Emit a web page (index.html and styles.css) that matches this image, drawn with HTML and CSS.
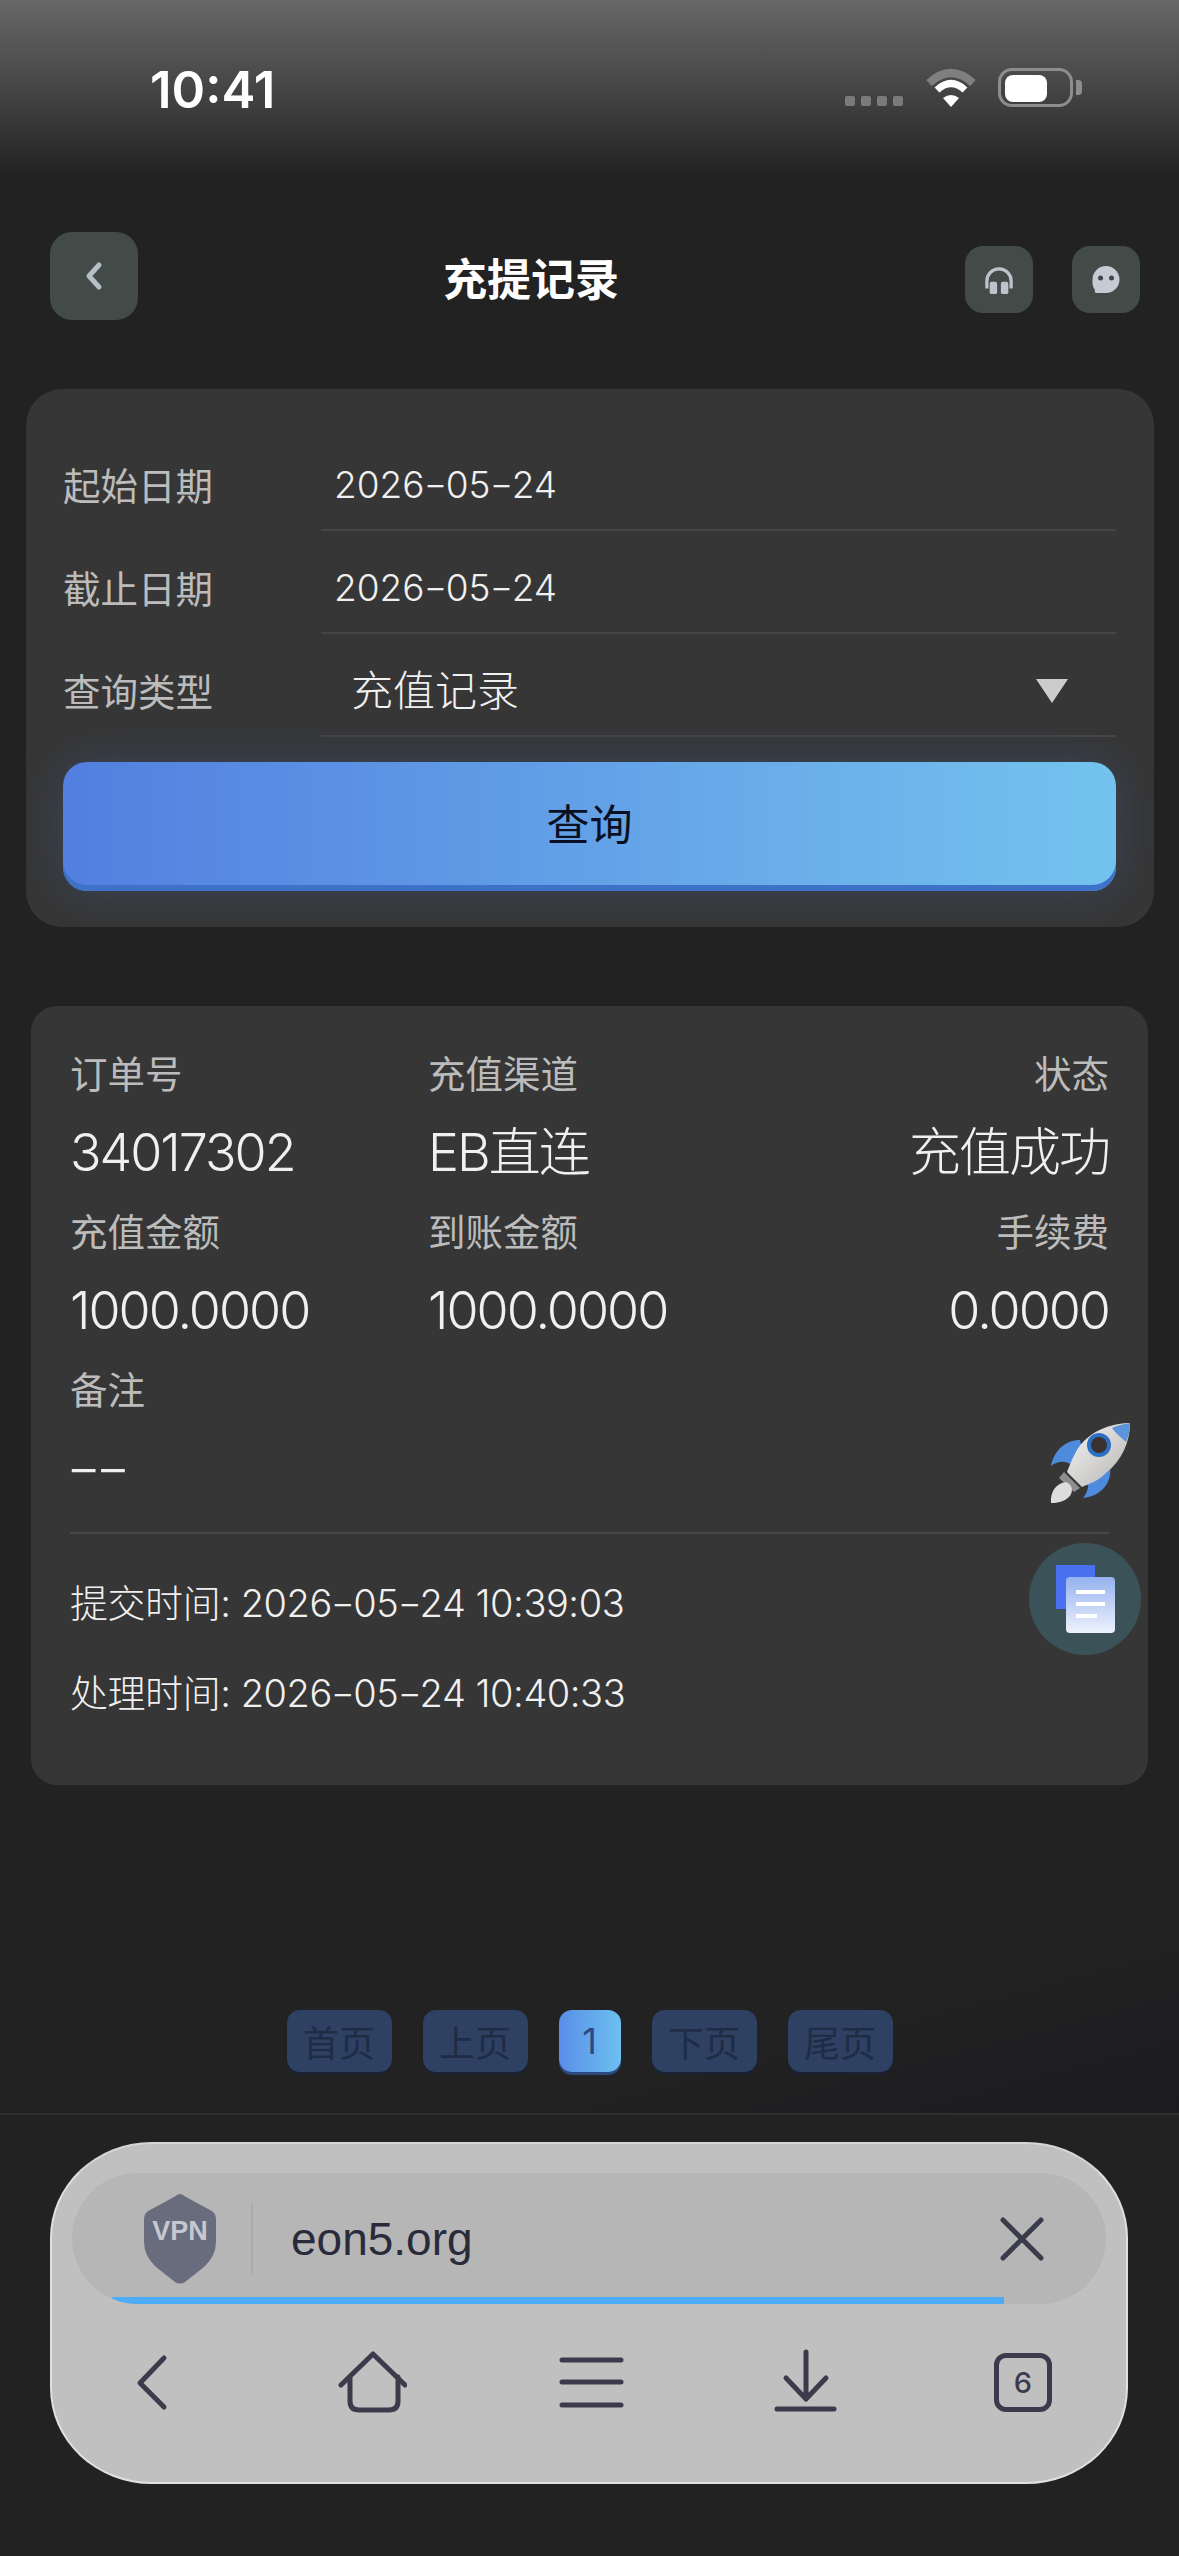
FILE: index.html
```html
<!DOCTYPE html>
<html lang="zh-CN">
<head>
<meta charset="utf-8">
<title>充提记录</title>
<link rel="stylesheet" href="styles.css">
</head>
<body>
<div class="page">
  <header class="status">
    <span class="time">10:41</span>
    <div class="status-right">
      <div class="signal"><i></i><i></i><i></i><i></i></div>
      <svg class="wifi" width="50" height="40" viewBox="0 0 50 40"><path d="M3 15Q25 -5 47 15" fill="none" stroke="#7f7f7f" stroke-width="8"/><path d="M11 22Q25 9 39 22" fill="none" stroke="#fff" stroke-width="7"/><path d="M25 39L17 30Q25 24 33 30Z" fill="#fff"/></svg>
      <div class="battery"><span class="battery-fill"></span></div>
      <span class="battery-nub"></span>
    </div>
  </header>

  <nav class="nav">
    <button class="back" aria-label="返回"><svg width="24" height="32" viewBox="0 0 24 32"><path d="M17 5L7 16L17 27" fill="none" stroke="#b4bfc8" stroke-width="5" stroke-linecap="round" stroke-linejoin="round"/></svg></button>
    <h1 class="title">充提记录</h1>
    <div class="nav-right">
      <button class="nav-btn" aria-label="客服"><svg width="30" height="28" viewBox="0 0 32 30"><path d="M3 24V16A13 13 0 0 1 29 16V24" fill="none" stroke="#bcc3ca" stroke-width="3.5"/><rect x="6" y="17" width="8" height="13" rx="2" fill="#bcc3ca"/><rect x="18" y="17" width="8" height="13" rx="2" fill="#bcc3ca"/></svg></button>
      <button class="nav-btn" aria-label="消息"><svg width="30" height="30" viewBox="0 0 30 30"><path d="M15 1A13.500 13.500 0 0 1 15 28H6Q3 28 4 25Q1 21 1.500 15A13.500 13.500 0 0 1 15 1Z" fill="#c4cbd2"/><circle cx="9.500" cy="13" r="2.500" fill="#3d4650"/><circle cx="20.500" cy="13" r="2.500" fill="#3d4650"/></svg></button>
    </div>
  </nav>

  <section class="filter">
    <div class="row"><span class="row-label">起始日期</span><span class="row-value">2026<b class="dash">-</b>05<b class="dash">-</b>24</span></div>
    <div class="row"><span class="row-label">截止日期</span><span class="row-value">2026<b class="dash">-</b>05<b class="dash">-</b>24</span></div>
    <div class="row"><span class="row-label">查询类型</span><span class="row-select"><span class="select-text">充值记录</span><i class="caret"></i></span></div>
    <button class="query">查询</button>
  </section>

  <section class="record">
    <div class="grid">
      <div class="cell"><span class="k">订单号</span><span class="v">34017302</span></div>
      <div class="cell"><span class="k">充值渠道</span><span class="v">EB直连</span></div>
      <div class="cell end"><span class="k">状态</span><span class="v">充值成功</span></div>
      <div class="cell"><span class="k">充值金额</span><span class="v">1000.0000</span></div>
      <div class="cell"><span class="k">到账金额</span><span class="v">1000.0000</span></div>
      <div class="cell end"><span class="k">手续费</span><span class="v">0.0000</span></div>
      <div class="cell"><span class="k">备注</span><span class="v"><b class="dashes">--</b></span></div>
    </div>
    <div class="times">
      <p>提交时间: 2026<b class="dash">-</b>05<b class="dash">-</b>24 10:39:03</p>
      <p>处理时间: 2026<b class="dash">-</b>05<b class="dash">-</b>24 10:40:33</p>
    </div>
  </section>

  <div class="pager-area">
    <div class="pager">
      <span class="pg">首页</span><span class="pg">上页</span><span class="pg cur">1</span><span class="pg">下页</span><span class="pg">尾页</span>
    </div>
  </div>

  <footer class="foot">
    <div class="browser">
      <div class="addr">
        <svg class="shield" width="72" height="90" viewBox="0 0 72 90"><path d="M36 0Q38 0 42 3L66 16Q72 19 72 25V48Q72 62 60 73L41 88Q36 91 31 88L12 73Q0 62 0 48V25Q0 19 6 16L30 3Q34 0 36 0Z" fill="#696c7c"/><text x="36" y="46" text-anchor="middle" class="vpn">VPN</text></svg>
        <span class="addr-sep"></span>
        <span class="url">eon5.org</span>
        <svg class="close" width="46" height="44" viewBox="0 0 46 44"><path d="M4 3L42 41M42 3L4 41" fill="none" stroke="#3a3b4b" stroke-width="5" stroke-linecap="round"/></svg>
        <span class="progress"></span>
      </div>
      <div class="tools">
        <svg width="70" height="70" viewBox="0 0 70 70"><path d="M47 11L23 36L47 60" class="ti"/></svg>
        <svg width="70" height="70" viewBox="0 0 70 70"><path d="M4 38L36 7L68 38M13 30V54Q13 63 22 63H52Q61 63 61 54V30" class="ti"/></svg>
        <svg width="70" height="70" viewBox="0 0 70 70"><path d="M6 13H65M6 35H65M6 58H65" class="ti"/></svg>
        <svg width="70" height="70" viewBox="0 0 70 70"><path d="M35 5V52M15 31L35 52L55 31M6 62H63" class="ti"/></svg>
        <div class="tabs"><span class="tab-box">6</span></div>
      </div>
    </div>
  </footer>

  <svg class="rocket" width="84" height="84" viewBox="0 0 84 84">
    <defs><linearGradient id="rb" x1="0" y1="0" x2="1" y2="1"><stop offset="0" stop-color="#f6f5f2"/><stop offset="1" stop-color="#b4b4b4"/></linearGradient></defs>
    <path d="M30 20C16 20 4 30 1 46C6 42 14 40 20 44L32 28Z" fill="#4f8bdc"/>
    <path d="M60 48C62 62 52 76 33 78C38 72 40 64 36 60L52 46Z" fill="#4f8bdc"/>
    <path d="M14 52L30 68L24 72L9 58Z" fill="#8d8d8d"/>
    <path d="M80 3C60 3 38 12 27 30C22 39 19 47 17 52L32 67C39 64 48 61 56 53C72 40 80 22 80 3Z" fill="url(#rb)"/>
    <path d="M80 3C72 4 66 6 62 8C66 14 72 18 76 22C79 16 80 9 80 3Z" fill="#5d95dc"/>
    <circle cx="49" cy="25" r="12" fill="#2d6fc4"/><circle cx="49" cy="25" r="8" fill="#3a3230"/>
    <path d="M1 83C0 72 6 63 16 62C23 65 23 71 20 76C14 82 8 83 1 83Z" fill="#ddd"/>
  </svg>

  <div class="copy">
    <svg width="60" height="68" viewBox="0 0 60 68">
      <defs><linearGradient id="dg" x1="0" y1="0" x2="0" y2="1"><stop offset="0" stop-color="#94b2ef"/><stop offset="1" stop-color="#eef2fd"/></linearGradient></defs>
      <rect x="0" y="0" width="39" height="44" fill="#4a70f0"/>
      <rect x="10" y="12" width="49" height="56" rx="4" fill="url(#dg)"/>
      <path d="M20 27H49M20 39H49M20 51H41" stroke="#fff" stroke-width="4" fill="none"/>
    </svg>
  </div>
</div>
</body>
</html>
```
FILE: styles.css
```css
* { box-sizing: border-box; }
html, body { margin: 0; padding: 0; }
body { background: #222; font-family: Inter, "Noto Sans CJK SC", sans-serif; }
p, h1 { margin: 0; }
button { border: 0; padding: 0; font-family: inherit; display: flex; align-items: center; justify-content: center; }

.page { position: relative; width: 1179px; height: 2556px; display: flex; flex-direction: column; overflow: hidden; background: #222; }

.status { height: 176px; padding: 0 97px 0 150px; display: flex; align-items: center; background: linear-gradient(#686868, #222); }
.time { font-size: 51px; font-weight: 600; color: #fff; padding-top: 2px; }
.status-right { margin-left: auto; display: flex; align-items: flex-start; }
.signal { display: flex; gap: 6px; margin-top: 28px; margin-right: 23px; }
.signal i { width: 10px; height: 10px; border-radius: 2px; background: #7a7a7a; }
.wifi { display: block; margin-right: 22px; }
.battery { width: 75px; height: 39px; border: 3px solid #8d8d8d; border-radius: 14px; padding: 4px; }
.battery-fill { display: block; width: 42px; height: 27px; border-radius: 8px; background: #fff; }
.battery-nub { width: 6px; height: 15px; margin: 12px 0 0 3px; border-radius: 0 4px 4px 0; background: #8d8d8d; }

.nav { height: 213px; padding: 56px 39px 0 50px; display: flex; align-items: flex-start; }
.back { width: 88px; height: 88px; border-radius: 22px; background: #434b49; }
.title { margin: 18px 0 0 305px; font-size: 44px; line-height: 60px; font-weight: 700; color: #fff; }
.nav-right { margin-left: auto; margin-top: 14px; display: flex; gap: 39px; }
.nav-btn { width: 68px; height: 67px; border-radius: 18px; background: #434b49; }

.dash { display: inline-block; margin: 0 0.06em; font-weight: inherit; transform: scaleX(1.4); }
.dashes { display: inline-block; margin-left: -4px; font-weight: inherit; letter-spacing: -4px; transform: scaleX(1.5); transform-origin: left center; }

.filter { margin: 0 25px 0 26px; padding: 39px 38px 36px 37px; border-radius: 36px; background: #363636; }
.row { height: 103px; padding-top: 12px; display: flex; align-items: center; font-size: 37px; }
.row-label { width: 258px; height: 100%; padding-bottom: 5px; display: flex; align-items: center; color: #bcbcbc; font-size: 37.5px; }
.row-value { flex: 1; height: 100%; padding-left: 13px; display: flex; align-items: center; color: #f0f0f0; font-weight: 300; }
.row-select { flex: 1; height: 100%; padding: 0 48px 0 30px; display: flex; align-items: center; justify-content: space-between; color: #f0f0f0; font-size: 42px; font-weight: 300; }
.select-text { position: relative; top: -3px; }
.row-value, .row-select { margin-top: -12px; padding-top: 12px; height: 103px; border-bottom: 2px solid #454545; }
.caret { width: 0; height: 0; border-left: 16px solid transparent; border-right: 16px solid transparent; border-top: 24px solid #ccc; }
.query { width: 100%; height: 129px; margin-top: 25px; padding-bottom: 10px; border-radius: 24px; background: linear-gradient(90deg, #527fe0, #74c3ee); color: #0a1022; font-size: 43px; box-shadow: inset 0 -6px 0 #3e72c8, 0 0 40px rgba(70, 120, 200, 0.25); }

.record { margin: 79px 31px 0 31px; height: 779px; padding: 30px 39px 0 39px; border-radius: 26px; background: #363636; }
.grid { display: grid; grid-template-columns: 358px 358px 1fr; }
.cell { height: 158px; display: flex; flex-direction: column; }
.cell.end { align-items: flex-end; }
.k { height: 78px; line-height: 78px; font-size: 37.5px; color: #bcbcbc; }
.v { height: 80px; line-height: 77px; font-size: 52px; color: #f0f0f0; font-weight: 300; letter-spacing: -2px; }
.times { margin-top: 22px; padding-top: 24px; border-top: 2px solid #484848; }
.times p { height: 90px; line-height: 90px; font-size: 38px; color: #f0f0f0; font-weight: 300; letter-spacing: -0.45px; }

.pager-area { flex: 1; display: flex; justify-content: center; padding-top: 225px; background: linear-gradient(165deg, #222 70%, #1b1b20 100%); border-bottom: 2px solid #2e2e2e; }
.pager { display: flex; gap: 31px; height: 64px; }
.pg { min-width: 105px; height: 62px; display: flex; align-items: center; justify-content: center; border-radius: 13px; background: #2e4163; color: #1e2c46; font-size: 36px; box-shadow: 0 3px 0 #1a2232; }
.pg.cur { min-width: 62px; background: linear-gradient(90deg, #5a8de8, #6cc0f0); color: #2a4a80; box-shadow: 0 3px 0 #2a4a80; }

.foot { padding: 27px 51px 72px 50px; }
.browser { height: 342px; padding: 29px 20px 0; border: 2px solid #e0e0e0; border-top-color: #d6d6d6; border-radius: 102px / 96px; background: #c0c0c0; }
.addr { position: relative; height: 131px; display: flex; align-items: center; padding: 0 61px 0 72px; border-radius: 66px; background: #b6b6b6; overflow: hidden; }
.shield { display: block; flex: none; }
.vpn { font-family: "Liberation Sans", sans-serif; font-weight: 700; font-size: 27px; fill: #c5c8d0; }
.addr-sep { width: 2px; height: 72px; margin-left: 35px; background: #ababab; }
.url { margin-left: 38px; font-family: "Liberation Sans", sans-serif; font-size: 46px; color: #2a2b3a; }
.close { margin-left: auto; }
.progress { position: absolute; left: 40px; bottom: 0; width: 892px; height: 7px; background: #4dabf7; border-radius: 0 0 0 12px; }
.tools { display: flex; gap: 148px; padding: 43px 0 0 45px; }
.tools svg { display: block; }
.tools svg:nth-child(2) { margin-left: 2px; }
.tools svg:nth-child(3) { margin-left: 1px; }
.tools svg:nth-child(4) { margin-left: -3px; }
.tools .tabs { margin-left: -1px; }
.ti { fill: none; stroke: #3b3b4b; stroke-width: 5; stroke-linecap: round; stroke-linejoin: round; }
.tabs { width: 70px; height: 70px; display: flex; align-items: center; justify-content: center; }
.tab-box { width: 58px; height: 59px; border: 5px solid #3b3b4b; border-radius: 12px; display: flex; align-items: center; justify-content: center; font-size: 29px; font-weight: 500; color: #3b3b4b; }

.rocket { position: absolute; left: 1050px; top: 1420px; }
.copy { position: absolute; left: 1029px; top: 1543px; width: 112px; height: 112px; padding: 22px 0 0 27px; border-radius: 50%; background: #3c5259; }
.copy svg { display: block; }
```
